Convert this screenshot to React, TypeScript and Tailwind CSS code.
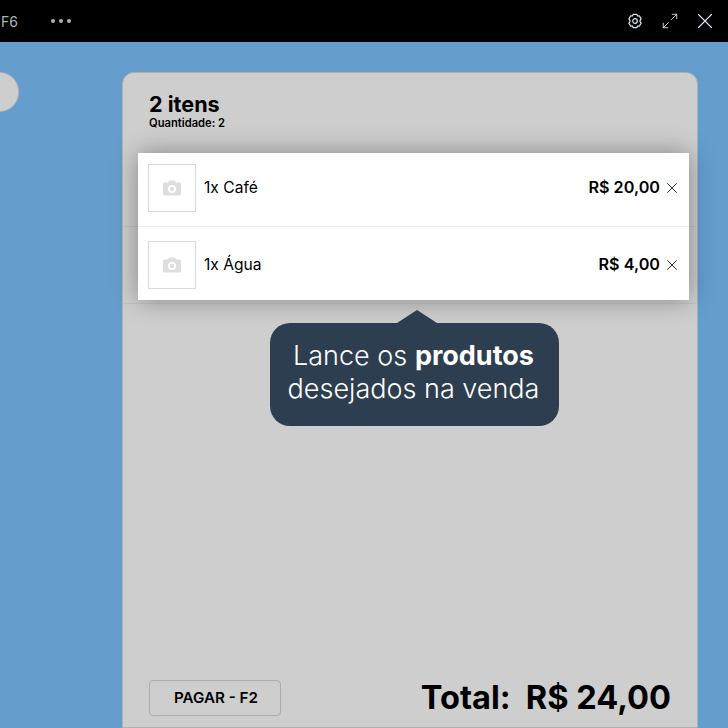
import { Maximize2, X } from "lucide-react";

function Camera() {
  return (
    <svg width="18" height="16" viewBox="0 0 18 16" className="block">
      <path
        fillRule="evenodd"
        fill="#dedede"
        d="M1.5 2.5H5L6 .5h6l1 2h3.5A1.5 1.5 0 0 1 18 4v10a1.5 1.5 0 0 1-1.500 1.500h-15A1.500 1.500 0 0 1 0 14V4a1.500 1.500 0 0 1 1.500-1.500ZM9 5a4 4 0 1 0 0 8 4 4 0 0 0 0-8Zm0 1.800a2.200 2.200 0 1 1 0 4.400 2.200 2.200 0 0 1 0-4.400Z"
      />
    </svg>
  );
}

function Gear() {
  return (
    <svg width="16" height="16" viewBox="0 0 16 16" fill="none" stroke="currentColor" strokeWidth="1.2" strokeLinejoin="round">
      <path d="M6.200 1.300h3.600l.7 1.700 1.800-.2 1.800 3.100-1.100 1.500.2.600-.2.600 1.100 1.500-1.800 3.100-1.800-.2-.7 1.700H6.200l-.7-1.700-1.800.2-1.800-3.100 1.100-1.500L2.800 8l.2-.600-1.100-1.500 1.800-3.100 1.800.2.700-1.700Z" />
      <circle cx="8" cy="8" r="2.300" />
    </svg>
  );
}

function Row({ name, price, first }: { name: string; price: string; first?: boolean }) {
  return (
    <div
      className={`flex bg-white pl-[10px] pr-[8px] ${
        first ? "h-[74px] border-b border-[#eeeeee] pt-[11px]" : "h-[73px] pt-[14px]"
      }`}
    >
      <div className="flex h-[48px] flex-1 items-center">
        <div className="flex h-[48px] w-[48px] items-center justify-center border border-[#d9d9d9]">
          <Camera />
        </div>
        <span className="ml-[8px] flex-1 text-[15.6px] text-black">{name}</span>
        <span className="mb-[2px] text-[16.2px] font-semibold text-black">{price}</span>
        <X size={18} strokeWidth={1.3} className="ml-[3px] text-[#1a2a33]" />
      </div>
    </div>
  );
}

export default function App() {
  return (
    <div className="flex h-[728px] w-[728px] flex-col overflow-hidden bg-[#659dcc] font-['Inter',sans-serif]">
      <header className="flex h-[42px] shrink-0 items-center bg-black text-[#a8b4bb]">
        <span className="ml-[1px] text-[14px]">F6</span>
        <div className="ml-[33px] flex gap-[4px]">
          <i className="h-[4px] w-[4px] rounded-full bg-[#adb2b6]" />
          <i className="h-[4px] w-[4px] rounded-full bg-[#adb2b6]" />
          <i className="h-[4px] w-[4px] rounded-full bg-[#adb2b6]" />
        </div>
        <div className="ml-auto mr-[10px] flex items-center text-[#d5e8f0]">
          <Gear />
          <Maximize2 size={18} strokeWidth={1.2} className="ml-[18px]" />
          <X size={26} strokeWidth={1} className="ml-[13px]" />
        </div>
      </header>

      <main className="relative flex-1">
        <div className="absolute left-[-20px] top-[30px] h-[40px] w-[39px] rounded-full border border-[#b5b5b5] bg-[#cecece]" />

        <section className="ml-[122px] mt-[30px] flex h-[656px] w-[576px] flex-col rounded-t-[12px] border border-[#b0b0b0] bg-[#cecece]">
          <div className="h-[61px] pl-[26px] pt-[19px] text-black">
            <h1 className="text-[21.6px] font-bold leading-[25px]">2 itens</h1>
            <p className="text-[11.2px] font-semibold leading-[13px]">Quantidade: 2</p>
          </div>
          <div className="h-[93px] border-b border-[#c4c4c4]" />
          <div className="h-[77px] border-b border-[#c4c4c4]" />
          <div className="flex-1" />
          <div className="flex items-center pb-[10px] pl-[26px] pr-[26px]">
            <button className="h-[36px] w-[132px] rounded-[4px] border border-[#adadad] pl-[2px] text-[15.2px] font-semibold text-black">
              PAGAR - F2
            </button>
            <div className="mb-[2px] ml-auto flex gap-[15px] text-[32.6px] font-bold leading-[36px] text-black">
              <span>Total:</span>
              <span>R$ 24,00</span>
            </div>
          </div>
        </section>

        <div className="absolute left-[138px] top-[111px] w-[551px] shadow-[0_0_24px_rgba(0,0,0,0.35)]">
          <Row name="1x Café" price="R$ 20,00" first />
          <Row name="1x Água" price="R$ 4,00" />
        </div>

        <div className="absolute left-[270px] top-[281px] h-[103px] w-[289px] rounded-[20px] bg-[#2d3e50] pr-[2px] pt-[16px] text-center text-[27px] font-light leading-[33px] text-white">
          <span className="absolute left-[127px] top-[-13px] h-0 w-0 border-x-[20px] border-b-[13px] border-x-transparent border-b-[#2d3e50]" />
          Lance os <b className="font-bold">produtos</b>
          <br />
          desejados na venda
        </div>
      </main>
    </div>
  );
}
